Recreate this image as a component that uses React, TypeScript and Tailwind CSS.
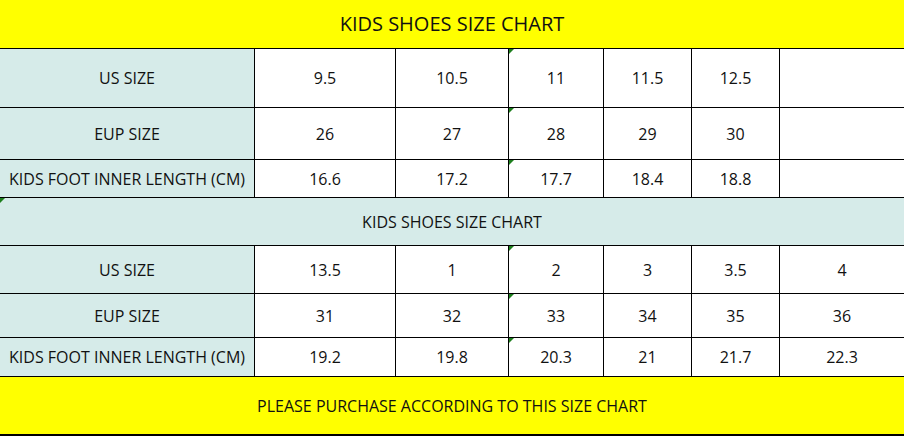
const cols = 'grid-cols-[255px_141px_113px_95px_88px_88px_124px]';

type Row = { label: string; values: string[]; h: string };

const tableA: Row[] = [
  { label: 'US SIZE', values: ['9.5', '10.5', '11', '11.5', '12.5', ''], h: 'h-[59px]' },
  { label: 'EUP SIZE', values: ['26', '27', '28', '29', '30', ''], h: 'h-[52px]' },
  { label: 'KIDS FOOT INNER LENGTH (CM)', values: ['16.6', '17.2', '17.7', '18.4', '18.8', ''], h: 'h-[38px]' },
];

const tableB: Row[] = [
  { label: 'US SIZE', values: ['13.5', '1', '2', '3', '3.5', '4'], h: 'h-[48px]' },
  { label: 'EUP SIZE', values: ['31', '32', '33', '34', '35', '36'], h: 'h-[44px]' },
  { label: 'KIDS FOOT INNER LENGTH (CM)', values: ['19.2', '19.8', '20.3', '21', '21.7', '22.3'], h: 'h-[39px]' },
];

function Flag() {
  return (
    <svg className="absolute left-0 top-0" width="5" height="5" viewBox="0 0 5 5">
      <polygon points="0,0 5,0 0,5" fill="#1d7f1d" />
    </svg>
  );
}

function SizeRow({ row }: { row: Row }) {
  return (
    <div className={`grid ${cols} ${row.h} border-b border-black`}>
      <div className="flex items-center justify-center border-r border-black bg-[#d6ebe9]">{row.label}</div>
      {row.values.map((v, i) => (
        <div
          key={i}
          className={`relative flex items-center justify-center bg-white ${i < 5 ? 'border-r border-black' : ''}`}
        >
          {i === 2 && <Flag />}
          {v}
        </div>
      ))}
    </div>
  );
}

export default function App() {
  return (
    <div className="w-[904px] h-[436px] overflow-hidden bg-white text-[16px] text-[#111] font-['Open_Sans',sans-serif]">
      <div className="flex h-[49px] items-center justify-center border-b border-black bg-[#ffff00] text-[20px]">
        KIDS SHOES SIZE CHART
      </div>
      {tableA.map((r) => (
        <SizeRow key={r.label} row={r} />
      ))}
      <div className="relative flex h-[48px] items-center justify-center border-b border-black bg-[#d6ebe9]">
        <Flag />
        KIDS SHOES SIZE CHART
      </div>
      {tableB.map((r) => (
        <SizeRow key={r.label} row={r} />
      ))}
      <div className="flex h-[59px] items-center justify-center border-b-2 border-black bg-[#ffff00]">
        PLEASE PURCHASE ACCORDING TO THIS SIZE CHART
      </div>
    </div>
  );
}
